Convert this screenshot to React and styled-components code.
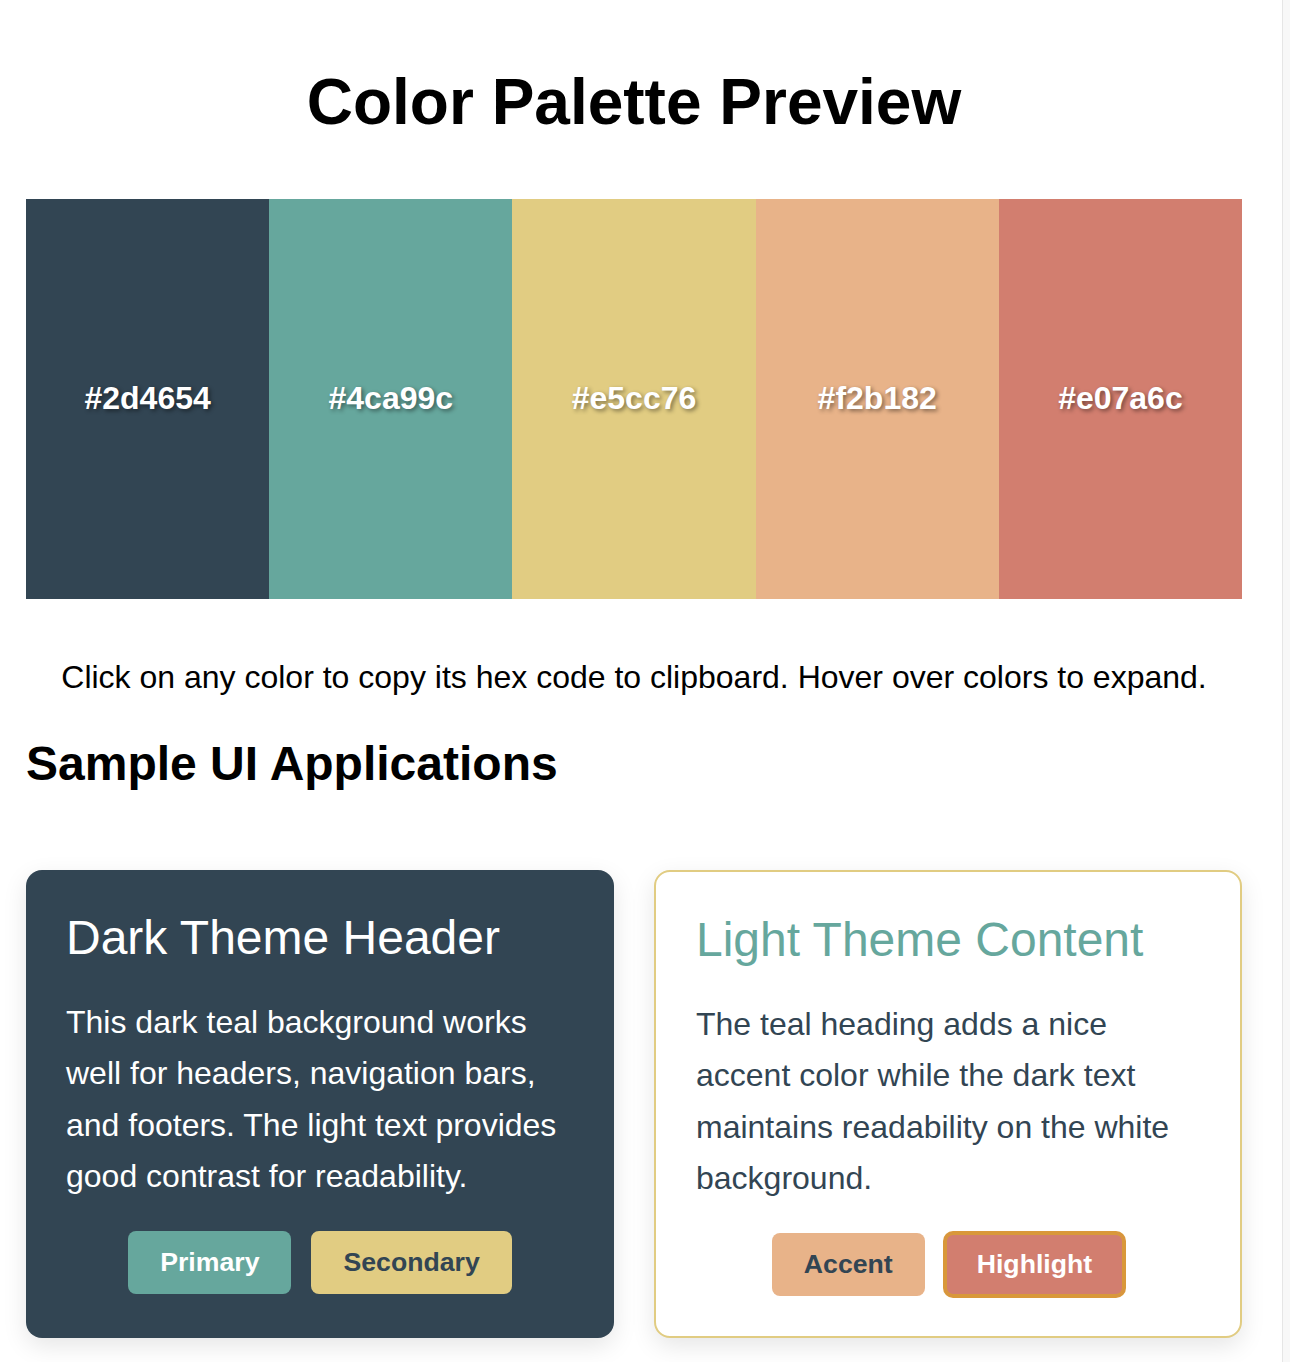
import React from 'react';
import styled, { createGlobalStyle } from 'styled-components';

const swatches = [
    { hex: '#2d4654', shown: '#324553' },
    { hex: '#4ca99c', shown: '#66a79d' },
    { hex: '#e5cc76', shown: '#e1cc82' },
    { hex: '#f2b182', shown: '#e8b389' },
    { hex: '#e07a6c', shown: '#d27e6f' },
];

const GlobalStyle = createGlobalStyle`
    html {
        background: linear-gradient(to right, #fff 1282px, #e6e6e6 1282px, #e6e6e6 1283px, #f8f8f8 1283px);
    }
    body {
        margin: 0;
        font-family: "Liberation Sans", Arial, sans-serif;
        color: #000;
    }
`;

const App = () => {
    return (
        <>
            <GlobalStyle />
            <Page>
                <Title>Color Palette Preview</Title>
                <Palette>
                    {swatches.map((s) => (
                        <Swatch key={s.hex} $bg={s.shown}>{s.hex}</Swatch>
                    ))}
                </Palette>
                <Hint>Click on any color to copy its hex code to clipboard. Hover over colors to expand.</Hint>
                <SectionTitle>Sample UI Applications</SectionTitle>
                <Cards>
                    <Card $dark>
                        <CardTitle $dark>Dark Theme Header</CardTitle>
                        <CardText $dark>
                            This dark teal background works well for headers, navigation bars,
                            and footers. The light text provides good contrast for readability.
                        </CardText>
                        <ButtonRow>
                            <Button $bg="#66a79d" $fg="#fff">Primary</Button>
                            <Button $bg="#e1cc82" $fg="#324553">Secondary</Button>
                        </ButtonRow>
                    </Card>
                    <Card>
                        <CardTitle>Light Theme Content</CardTitle>
                        <CardText>
                            The teal heading adds a nice accent color while the dark text
                            maintains readability on the white background.
                        </CardText>
                        <ButtonRow>
                            <Button $bg="#e8b389" $fg="#324553">Accent</Button>
                            <Button $bg="#d27e6f" $fg="#fff" $ring>Highlight</Button>
                        </ButtonRow>
                    </Card>
                </Cards>
            </Page>
        </>
    );
};

export default App;

const Page = styled.div`
    width: 1216px;
    margin-left: 26px;
    padding-top: 65px;
    padding-bottom: 40px;
`;

const Title = styled.h1`
    margin: 0 0 60px;
    font-size: 64px;
    font-weight: 700;
    line-height: normal;
    text-align: center;
`;

const Palette = styled.div`
    display: flex;
    height: 400px;
`;

const Swatch = styled.div`
    flex: 1;
    display: flex;
    align-items: center;
    justify-content: center;
    padding-bottom: 2px;
    background: ${(p) => p.$bg};
    color: #fff;
    font-size: 32px;
    font-weight: 700;
    text-shadow: 2px 2px 4px rgba(0, 0, 0, 0.45);
    cursor: pointer;
`;

const Hint = styled.p`
    margin: 53px 0 0;
    font-size: 32px;
    line-height: 1.6;
    text-align: center;
`;

const SectionTitle = styled.h2`
    margin: 33px 0 0;
    font-size: 48px;
    font-weight: 700;
    line-height: normal;
`;

const Cards = styled.div`
    display: grid;
    grid-template-columns: 1fr 1fr;
    gap: 40px;
    margin-top: 79px;
`;

const Card = styled.div`
    padding: 40px;
    border-radius: 16px;
    background: ${(p) => (p.$dark ? '#324553' : '#fff')};
    border: ${(p) => (p.$dark ? 'none' : '2px solid #e1cc82')};
    box-shadow: 0 8px 24px rgba(0, 0, 0, 0.1);
`;

const CardTitle = styled.h3`
    margin: 0;
    font-size: 48px;
    font-weight: 400;
    line-height: normal;
    color: ${(p) => (p.$dark ? '#fff' : '#66a79d')};
`;

const CardText = styled.p`
    margin: 32px 0 29px;
    font-size: 32px;
    line-height: 1.6;
    color: ${(p) => (p.$dark ? '#fff' : '#324553')};
`;

const ButtonRow = styled.div`
    display: flex;
    justify-content: center;
    align-items: center;
    gap: 20px;
`;

const Button = styled.button`
    padding: 16px 32px;
    border: none;
    border-radius: 8px;
    background: ${(p) => p.$bg};
    color: ${(p) => p.$fg};
    font-family: "Liberation Sans", Arial, sans-serif;
    font-size: 26.67px;
    font-weight: 700;
    line-height: normal;
    cursor: pointer;
    box-shadow: ${(p) => (p.$ring ? '0 0 0 2px #d9983a, inset 0 0 0 2px #d9983a' : 'none')};
`;
